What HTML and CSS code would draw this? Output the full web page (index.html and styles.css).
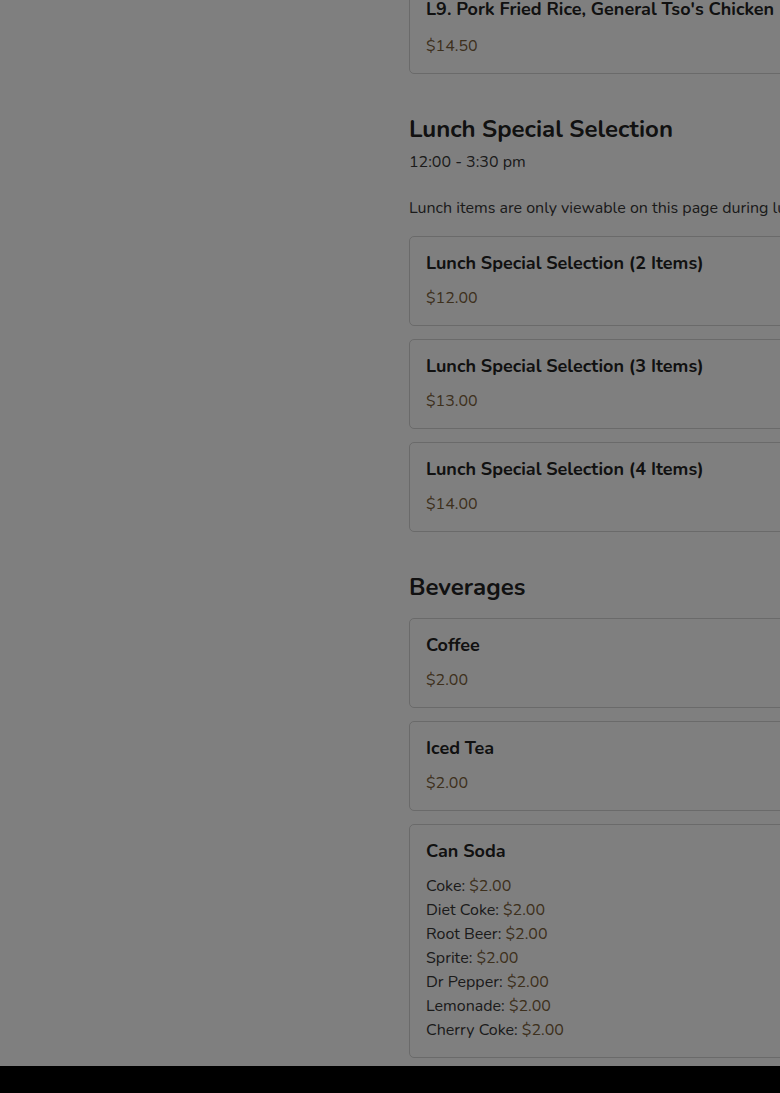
FILE: index.html
```html
<!DOCTYPE html>
<html lang="en">
<head>
<meta charset="utf-8">
<title>Menu</title>
<link rel="stylesheet" href="styles.css">
</head>
<body>
<div class="viewport">
  <main class="menu">
    <article class="item first">
      <h3 class="item-name">L9. Pork Fried Rice, General Tso's Chicken</h3>
      <div class="price">$14.50</div>
    </article>

    <section class="category">
      <h2 class="cat-title">Lunch Special Selection</h2>
      <p class="cat-hours">12:00 - 3:30 pm</p>
      <p class="cat-note">Lunch items are only viewable on this page during lunch hours. Please check back later.</p>
      <article class="item">
        <h3 class="item-name">Lunch Special Selection (2 Items)</h3>
        <div class="price">$12.00</div>
      </article>
      <article class="item">
        <h3 class="item-name">Lunch Special Selection (3 Items)</h3>
        <div class="price">$13.00</div>
      </article>
      <article class="item">
        <h3 class="item-name">Lunch Special Selection (4 Items)</h3>
        <div class="price">$14.00</div>
      </article>
    </section>

    <section class="category">
      <h2 class="cat-title tight">Beverages</h2>
      <article class="item">
        <h3 class="item-name">Coffee</h3>
        <div class="price">$2.00</div>
      </article>
      <article class="item">
        <h3 class="item-name">Iced Tea</h3>
        <div class="price">$2.00</div>
      </article>
      <article class="item">
        <h3 class="item-name">Can Soda</h3>
        <ul class="options">
          <li>Coke: <span class="opt-price">$2.00</span></li>
          <li>Diet Coke: <span class="opt-price">$2.00</span></li>
          <li>Root Beer: <span class="opt-price">$2.00</span></li>
          <li>Sprite: <span class="opt-price">$2.00</span></li>
          <li>Dr Pepper: <span class="opt-price">$2.00</span></li>
          <li>Lemonade: <span class="opt-price">$2.00</span></li>
          <li>Cherry Coke: <span class="opt-price">$2.00</span></li>
        </ul>
      </article>
    </section>
  </main>
</div>
<div class="bottom-bar"></div>
<div class="overlay"></div>
</body>
</html>
```
FILE: styles.css
```css
* { box-sizing: border-box; }

html, body {
  margin: 0;
  padding: 0;
}

body {
  height: 1093px;
  overflow: hidden;
  background: #ffffff;
  color: #333333;
  font-family: "Nunito", "Open Sans", "Noto Sans", sans-serif;
  display: flex;
  flex-direction: column;
}

.viewport {
  height: 1066px;
  overflow: hidden;
  flex: none;
}

.bottom-bar {
  height: 27px;
  background: #000000;
  flex: none;
}

.menu {
  margin: -18px 0 0 409px;
  width: 720px;
}

.item {
  border: 1px solid #d4d4d4;
  border-radius: 5px;
  padding: 15px 16px 15px;
  margin-bottom: 13px;
  background: #ffffff;
}

.item.first .item-name {
  margin-bottom: 14px;
}

.item-name {
  margin: 0 0 12px;
  font-size: 18px;
  line-height: 22px;
  font-weight: 700;
  color: #222222;
  white-space: nowrap;
}

.price {
  font-size: 16px;
  line-height: 24px;
  color: #7a603a;
}

.category {
  margin-top: 40px;
}

.cat-title {
  margin: 0;
  font-size: 24px;
  line-height: 30px;
  font-weight: 700;
  color: #222222;
}

.cat-title.tight {
  margin-bottom: 16px;
}

.cat-hours {
  margin: 7px 0 0;
  font-size: 16px;
  line-height: 22px;
  color: #363636;
}

.cat-note {
  margin: 24px 0 17px;
  font-size: 16px;
  line-height: 22px;
  color: #363636;
  white-space: nowrap;
}

.options {
  list-style: none;
  margin: 0;
  padding: 0;
  font-size: 16px;
  line-height: 24px;
  color: #363636;
}

.opt-price {
  color: #7a603a;
}

.overlay {
  position: fixed;
  inset: 0;
  background: rgba(0, 0, 0, 0.5);
}
```
